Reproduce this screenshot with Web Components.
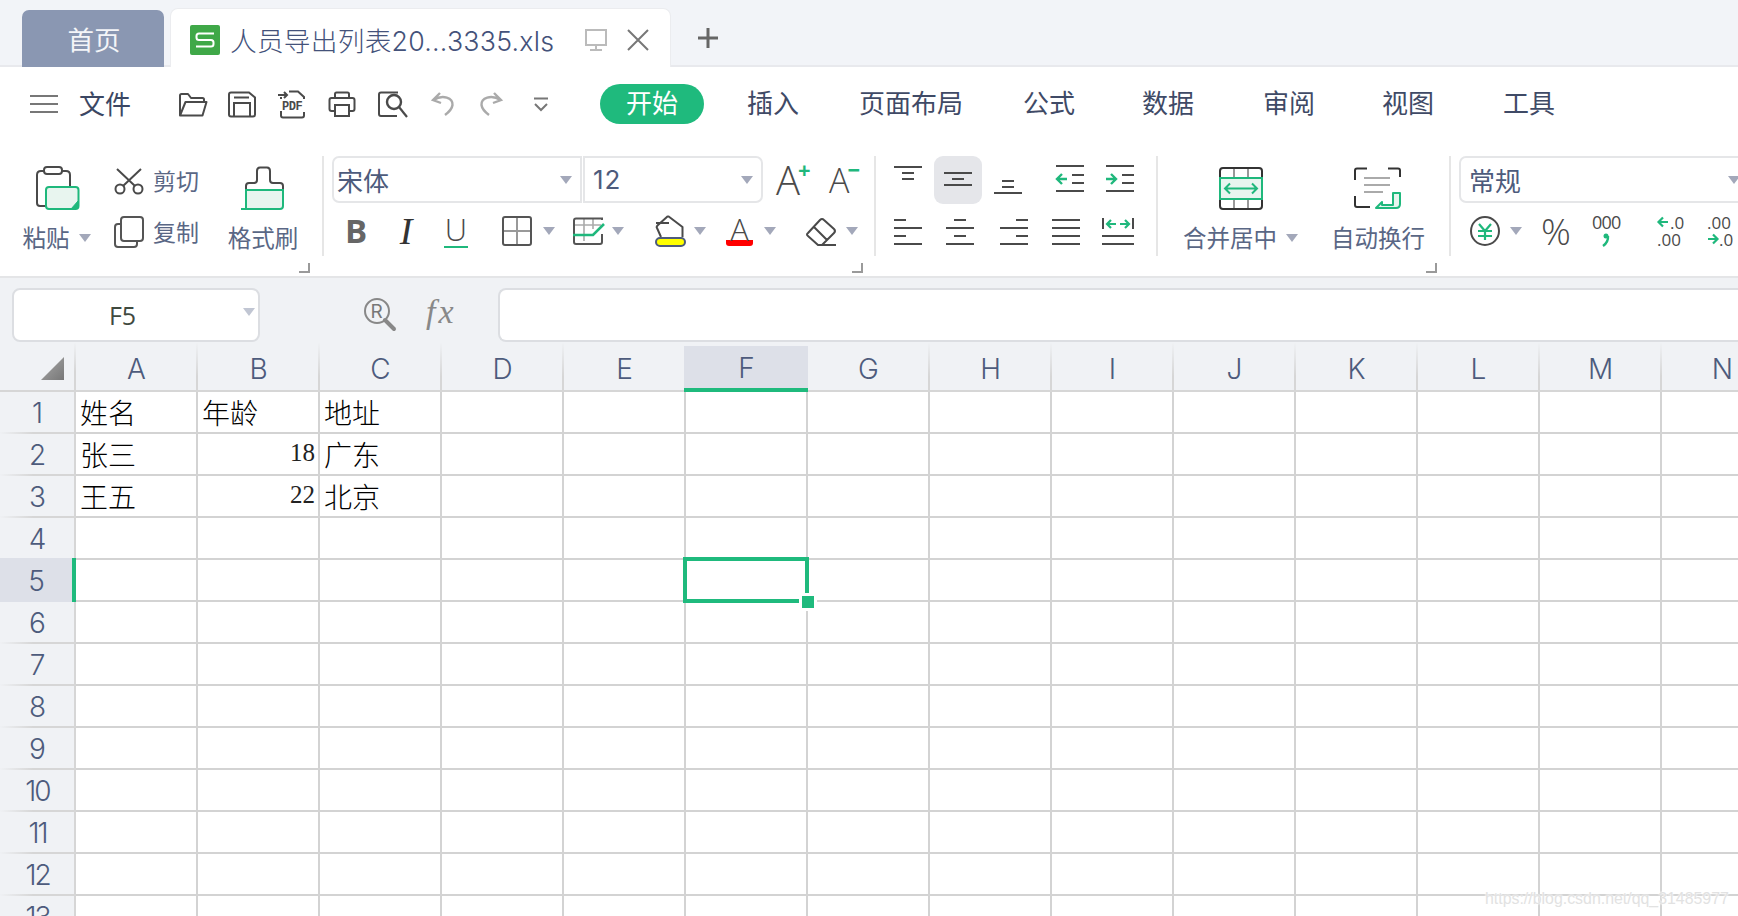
<!DOCTYPE html>
<html lang="zh-CN">
<head>
<meta charset="utf-8">
<title>人员导出列表</title>
<style>
  html, body { margin: 0; height: 100%; background: #fff; overflow: hidden; }
  body { width: 1738px; height: 916px; font-family: "Inter", "Noto Sans CJK SC", sans-serif; color: #4d5b7c; }
</style>
</head>
<body>
<wps-app>
  <wps-tabbar>
    <wps-home-tab>首页</wps-home-tab>
    <wps-doc-tab>人员导出列表20...3335.xls</wps-doc-tab>
  </wps-tabbar>

  <wps-menubar>
    <wps-menu-item active style="margin-left:0">开始</wps-menu-item>
    <wps-menu-item style="margin-left:43px">插入</wps-menu-item>
    <wps-menu-item style="margin-left:60px">页面布局</wps-menu-item>
    <wps-menu-item style="margin-left:60px">公式</wps-menu-item>
    <wps-menu-item style="margin-left:67px">数据</wps-menu-item>
    <wps-menu-item style="margin-left:69px">审阅</wps-menu-item>
    <wps-menu-item style="margin-left:67px">视图</wps-menu-item>
    <wps-menu-item style="margin-left:69px">工具</wps-menu-item>
  </wps-menubar>

  <wps-ribbon>
    <wps-group width="322" corner style="padding-left:23px">
      <wps-big-btn icon="paste" label="粘贴" caret style="width:67px"></wps-big-btn>
      <wps-stack style="margin-left:24px">
        <wps-small-btn icon="cut" label="剪切"></wps-small-btn>
        <wps-small-btn icon="copy" label="复制"></wps-small-btn>
      </wps-stack>
      <wps-big-btn icon="brush" label="格式刷" style="margin-left:29px;width:70px"></wps-big-btn>
    </wps-group>
    <wps-sep></wps-sep>

    <wps-group width="550" corner column top="16" style="--corner-right:11px">
      <wps-row style="height:47px">
        <wps-select first style="margin-left:8px;width:250px">宋体</wps-select>
        <wps-select last style="width:180px;letter-spacing:1px">12</wps-select>
        <wps-glyph kind="grow" style="margin-left:13px;width:34px">A<b>+</b></wps-glyph>
        <wps-glyph kind="shrink" style="margin-left:19px;width:30px">A<b>−</b></wps-glyph>
      </wps-row>
      <wps-row style="margin-top:13px">
        <wps-glyph kind="bold" style="margin-left:22px;width:20px">B</wps-glyph>
        <wps-glyph kind="italic" style="margin-left:32px;width:16px">I</wps-glyph>
        <wps-glyph kind="under" style="margin-left:30px;width:24px">U</wps-glyph>
        <wps-icon name="border" style="margin-left:34px"></wps-icon>
        <wps-caret style="margin-left:11px"></wps-caret>
        <wps-icon name="cellformat" style="margin-left:18px"></wps-icon>
        <wps-caret style="margin-left:7px"></wps-caret>
        <wps-icon name="bucket" style="margin-left:30px"></wps-icon>
        <wps-caret style="margin-left:8px"></wps-caret>
        <wps-glyph kind="color" style="margin-left:20px;width:27px">A</wps-glyph>
        <wps-caret style="margin-left:11px"></wps-caret>
        <wps-icon name="eraser" style="margin-left:30px"></wps-icon>
        <wps-caret style="margin-left:8px"></wps-caret>
      </wps-row>
    </wps-group>
    <wps-sep></wps-sep>

    <wps-group width="280" column top="16">
      <wps-row style="height:48px">
        <wps-icon name="alignTop" style="margin-left:8px"></wps-icon>
        <wps-icon name="alignMiddle" pressed style="margin-left:2px"></wps-icon>
        <wps-icon name="alignBottom" style="margin-left:2px"></wps-icon>
        <wps-icon name="indentLess" style="margin-left:14px"></wps-icon>
        <wps-icon name="indentMore" style="margin-left:2px"></wps-icon>
      </wps-row>
      <wps-row style="margin-top:12px">
        <wps-icon name="alignLeft" style="margin-left:18px"></wps-icon>
        <wps-icon name="alignCenter" style="margin-left:24px"></wps-icon>
        <wps-icon name="alignRight" style="margin-left:26px"></wps-icon>
        <wps-icon name="justify" style="margin-left:24px"></wps-icon>
        <wps-icon name="distribute" style="margin-left:22px"></wps-icon>
      </wps-row>
    </wps-group>
    <wps-sep></wps-sep>

    <wps-group width="291" corner top="27" style="padding-left:27px;--label-gap:11px;--corner-right:12px">
      <wps-big-btn icon="merge" label="合并居中" caret style="width:111px"></wps-big-btn>
      <wps-big-btn icon="wrap" label="自动换行" style="margin-left:34px;width:96px"></wps-big-btn>
    </wps-group>
    <wps-sep></wps-sep>

    <wps-group width="300" column top="16">
      <wps-row style="height:47px">
        <wps-select first last style="margin-left:8px;width:291px">常规</wps-select>
      </wps-row>
      <wps-row style="margin-top:13px">
        <wps-icon name="yen" style="margin-left:19px"></wps-icon>
        <wps-caret style="margin-left:10px"></wps-caret>
        <wps-glyph kind="percent" style="margin-left:19px;width:30px">%</wps-glyph>
        <wps-icon name="thousands" style="margin-left:21px"></wps-icon>
        <wps-icon name="decMore" style="margin-left:35px"></wps-icon>
        <wps-icon name="decLess" style="margin-left:22px"></wps-icon>
      </wps-row>
    </wps-group>
  </wps-ribbon>

  <wps-formula-bar cell="F5"></wps-formula-bar>
  <wps-sheet></wps-sheet>
</wps-app>

<script>
const GREEN = '#1fb87c';
const INK = '#4a4a4a';
const TINT = '#e8f5ef';

// width, height, inner svg
const ICONS = {
  menu: [28, 18, `<path d="M0 1H28M0 9H28M0 17H28" stroke="#777" stroke-width="2"/>`],
  folder: [30, 25, `<path d="M2 23V3.5Q2 2 3.5 2H10l3 4h11.5Q26 6 26 7.5V10M7.5 10H28.5L24.5 23.5H2Z" stroke="${INK}" stroke-width="2" fill="none" stroke-linejoin="round"/>`],
  save: [28, 27, `<path d="M3 1.5H21L27 6.5V23.5Q27 25.5 25 25.5H3Q1 25.5 1 23.5V3.5Q1 1.5 3 1.5ZM6 6.5H21M6 25V12H22V25" stroke="${INK}" stroke-width="2" fill="none"/>`],
  pdf: [28, 29, `<path d="M0 5H9M6 2L9 5L6 8M11 1.5H20L26 7V9M3 9V7M3 21V25.5Q3 27.5 5 27.5H24Q26 27.5 26 25.5V22" stroke="${INK}" stroke-width="2" fill="none"/><text x="4" y="19.5" font-family="Liberation Mono" font-weight="700" font-size="12" letter-spacing="-.4" fill="${INK}">PDF</text>`],
  print: [28, 26, `<path d="M7 7V3Q7 1.5 8.5 1.5H19.5Q21 1.5 21 3V7M6 20H3.5Q1.5 20 1.5 18V9Q1.5 7 3.5 7H24.5Q26.5 7 26.5 9V18Q26.5 20 24.5 20H22M7 14H21V25H7Z" stroke="${INK}" stroke-width="2" fill="none"/>`],
  preview: [30, 27, `<path d="M20 1.5H3Q1 1.5 1 3.5V23Q1 25 3 25H19" stroke="${INK}" stroke-width="2" fill="none"/><circle cx="16" cy="11" r="7" stroke="${INK}" stroke-width="2.4" fill="none"/><path d="M21 16L29 26" stroke="${INK}" stroke-width="2.2"/>`],
  undo: [24, 24, `<path d="M9 1L2 8L10 11M2.5 8C12 2 22 6 21.5 13C21 17 18 20 14 23" stroke="#aaa" stroke-width="2.4" fill="none"/>`],
  redo: [24, 24, `<path d="M15 1L22 8L14 11M21.5 8C12 2 2 6 2.5 13C3 17 6 20 10 23" stroke="#aaa" stroke-width="2.4" fill="none"/>`],
  more: [16, 15, `<path d="M1 1.5H15M2 7L8 13L14 7" stroke="#777" stroke-width="2" fill="none"/>`],
  sheetS: [30, 30, `<rect width="30" height="30" rx="2" fill="#3fa848"/><path d="M24 8.5H9Q6.5 8.5 6.5 11V12.5Q6.5 15 9 15H21Q23.5 15 23.5 17.5V19Q23.5 21.5 21 21.5H6" stroke="#fff" stroke-width="2" fill="none"/>`],
  monitor: [22, 22, `<path d="M1 1H21V16H1ZM11 16V21M5 21H17" stroke="#bbb" stroke-width="2" fill="none"/>`],
  close: [22, 22, `<path d="M1 1L21 21M21 1L1 21" stroke="#777" stroke-width="2"/>`],
  plus: [20, 20, `<path d="M10 0V20M0 10H20" stroke="#666" stroke-width="3"/>`],
  paste: [44, 44, `<path d="M9 5H6Q2 5 2 9V37Q2 40 5 40H11M27 5H31Q35 5 35 9V21" stroke="${INK}" stroke-width="2" fill="none"/><rect x="9" y="1" width="18" height="7" rx="3" stroke="${INK}" stroke-width="2" fill="none"/><rect x="11" y="21" width="32.5" height="22" rx="3" fill="${TINT}" stroke="${GREEN}" stroke-width="2"/><path d="M43 35L36 43H40Q43 43 43 40Z" fill="${GREEN}" stroke="${GREEN}"/>`],
  cut: [30, 27, `<circle cx="6" cy="21" r="4.5" stroke="${INK}" stroke-width="2" fill="none"/><circle cx="24" cy="21" r="4.5" stroke="${INK}" stroke-width="2" fill="none"/><path d="M9 18L27 1M21 18L3 1" stroke="${INK}" stroke-width="2"/>`],
  copy: [30, 32, `<rect x="7" y="1" width="22" height="24" rx="3" stroke="#555" stroke-width="2" fill="none"/><path d="M7 8H4Q1 8 1 11V28Q1 31 4 31H20Q23 31 23 28V25" stroke="#555" stroke-width="2" fill="none"/>`],
  brush: [44, 44, `<path d="M5 24V20Q5 17 8 17H13Q16 17 16 14V5Q16 1.5 19 1.5H26Q29 1.5 29 5V14Q29 17 32 17H39Q42 17 42 20V24" stroke="${INK}" stroke-width="2" fill="none"/><path d="M0 43H39Q42 43 42 40V24H5V42" fill="${TINT}" stroke="${GREEN}" stroke-width="2"/>`],
  border: [30, 30, `<path d="M15 2V28M2 15H28" stroke="#999" stroke-width="2"/><rect x="1" y="1" width="28" height="28" rx="2" stroke="#555" stroke-width="2" fill="none"/>`],
  cellformat: [32, 28, `<path d="M2 8H28M11 2V24M20 2V12" stroke="#aaa" stroke-width="1.6"/><path d="M29 3V1.5H3Q1 1.5 1 3.5V25Q1 27 3 27H27Q29 27 29 25V17" stroke="#555" stroke-width="2" fill="none"/><path d="M0 18H20L31 7" stroke="${GREEN}" stroke-width="2.6" fill="none"/>`],
  bucket: [32, 32, `<path d="M2 8H15M14 1L28.5 12V22M7 22L3 13Q2 12 4 10L14 1" stroke="${INK}" stroke-width="2" fill="none" stroke-linejoin="round"/><rect x="2" y="23" width="29" height="8" rx="4" fill="#ff0" stroke="#4d5b7c" stroke-width="2"/>`],
  eraser: [32, 30, `<path d="M2 17L14 4Q16 2 18 4L28 13Q30 15 28 17L16 29H12L2 20Q0 18.5 2 17ZM8 11L21 24M13 29H30" stroke="${INK}" stroke-width="2" fill="none"/>`],
  alignTop: [48, 48, `<path d="M10 11H38M18 17H30M18 23H30" stroke="${INK}" stroke-width="2"/>`],
  alignMiddle: [48, 48, `<path d="M10 17H38M18 23H30M10 29H38" stroke="${INK}" stroke-width="2"/>`],
  alignBottom: [48, 48, `<path d="M18 25H30M18 31H30M10 37H38" stroke="${INK}" stroke-width="2"/>`],
  indentLess: [48, 48, `<path d="M10 10H38M26 19H38M26 27H38M10 35H38" stroke="${INK}" stroke-width="2"/><path d="M21 23H11M16 18L11 23L16 28" stroke="${GREEN}" stroke-width="2.4" fill="none"/>`],
  indentMore: [48, 48, `<path d="M10 10H38M26 19H38M26 27H38M10 35H38" stroke="${INK}" stroke-width="2"/><path d="M10 23H20M15 18L20 23L15 28" stroke="${GREEN}" stroke-width="2.4" fill="none"/>`],
  alignLeft: [28, 28, `<path d="M0 3H12M0 11H28M0 19H12M0 27H28" stroke="${INK}" stroke-width="2"/>`],
  alignCenter: [28, 28, `<path d="M8 3H20M0 11H28M8 19H20M0 27H28" stroke="${INK}" stroke-width="2"/>`],
  alignRight: [28, 28, `<path d="M16 3H28M0 11H28M16 19H28M0 27H28" stroke="${INK}" stroke-width="2"/>`],
  justify: [28, 28, `<path d="M0 3H28M0 11H28M0 19H28M0 27H28" stroke="${INK}" stroke-width="2"/>`],
  distribute: [32, 28, `<path d="M1 1V12M31 1V12M0 19H32M0 27H32" stroke="${INK}" stroke-width="2"/><path d="M14 7H5M9 3L5 7L9 11M18 7H27M23 3L27 7L23 11" stroke="${GREEN}" stroke-width="2.2" fill="none"/>`],
  merge: [44, 44, `<path d="M15 2V12M29 2V12M15 31V42M29 31V42" stroke="#999" stroke-width="2"/><rect x="1" y="1" width="42" height="41" rx="3" stroke="#333" stroke-width="2" fill="none"/><rect x="1" y="11" width="42" height="21" fill="${TINT}" stroke="${GREEN}" stroke-width="2"/><path d="M6 21.5H38M11 16.5L6 21.5L11 26.5M33 16.5L38 21.5L33 26.5" stroke="${GREEN}" stroke-width="2" fill="none"/>`],
  wrap: [48, 44, `<path d="M13 1.5H3Q1 1.5 1 3.5V13M34 1.5H44Q46 1.5 46 3.5V10M1 29V38Q1 40 3 40H16" stroke="#333" stroke-width="2" fill="none"/><path d="M10 11H36M10 18H36M10 25H29" stroke="#aaa" stroke-width="2"/><path d="M39 26H46V37Q46 41 42 41H22L28 35V38H39Z" fill="${TINT}" stroke="${GREEN}" stroke-width="2" stroke-linejoin="round"/>`],
  yen: [30, 30, `<circle cx="15" cy="15" r="14" stroke="${INK}" stroke-width="2" fill="none"/><path d="M9 8L15 15L21 8M15 15V24M8 15H22M8 20H22" stroke="${GREEN}" stroke-width="2.2" fill="none"/>`],
  thousands: [30, 32, `<text x="0" y="14" font-family="Open Sans" font-size="18" letter-spacing="-.8" fill="${INK}">000</text><circle cx="14" cy="21" r="2.5" fill="${GREEN}"/><path d="M16 21Q16.5 27 11 31" stroke="${GREEN}" stroke-width="2.4" fill="none"/>`],
  decMore: [28, 32, `<path d="M11 7H2M6 2.5L1.5 7L6 11.5" stroke="${GREEN}" stroke-width="2.2" fill="none"/><text x="13" y="14" font-family="Open Sans" font-size="17" fill="${INK}">.0</text><text x="0" y="31" font-family="Open Sans" font-size="17" fill="${INK}">.00</text>`],
  decLess: [28, 32, `<text x="0" y="14" font-family="Open Sans" font-size="17" fill="${INK}">.00</text><path d="M1 24H10M6 19.5L10.5 24L6 28.5" stroke="${GREEN}" stroke-width="2.2" fill="none"/><text x="12" y="31" font-family="Open Sans" font-size="17" fill="${INK}">.0</text>`],
  search: [32, 32, `<circle cx="13" cy="13" r="12" stroke="#888" stroke-width="2" fill="none"/><path d="M21 22L30 31" stroke="#888" stroke-width="4" stroke-linecap="round"/><text x="6.5" y="20" font-family="Inter" font-size="19" fill="#777">R</text>`]
};

class WpsIcon extends HTMLElement {
  connectedCallback() {
    const [w, h, body] = ICONS[this.getAttribute('name')] || [0, 0, ''];
    this.attachShadow({ mode: 'open' }).innerHTML = `
      <style>
        :host { display: inline-flex; flex: none; }
        :host([pressed]) { background: #e5e6ea; border-radius: 9px; }
        svg { display: block; overflow: visible; }
      </style>
      <svg width="${w}" height="${h}" viewBox="0 0 ${w} ${h}">${body}</svg>`;
  }
}

class WpsCaret extends HTMLElement {
  constructor() {
    super();
    this.attachShadow({ mode: 'open' }).innerHTML = `
      <style>
        :host {
          display: block; flex: none; width: 0; height: 0;
          border-left: 6px solid transparent; border-right: 6px solid transparent;
          border-top: 8px solid var(--caret, #a3a8ba);
        }
      </style>`;
  }
}

class WpsApp extends HTMLElement {
  constructor() {
    super();
    this.attachShadow({ mode: 'open' }).innerHTML = `
      <style>
        :host { display: flex; flex-direction: column; width: 1738px; height: 916px; overflow: hidden; }
      </style>
      <slot></slot>`;
  }
}

class WpsTabbar extends HTMLElement {
  constructor() {
    super();
    this.attachShadow({ mode: 'open' }).innerHTML = `
      <style>
        :host {
          display: flex; flex: none; height: 67px; box-sizing: border-box;
          background: #f2f4f8; padding: 10px 0 0 22px;
          box-shadow: inset 0 -2px 0 #e8e9ed;
        }
        .plus { margin: 18px 0 0 28px; }
      </style>
      <slot></slot>
      <wps-icon class="plus" name="plus"></wps-icon>`;
  }
}

class WpsHomeTab extends HTMLElement {
  constructor() {
    super();
    this.attachShadow({ mode: 'open' }).innerHTML = `
      <style>
        :host {
          display: flex; align-items: center; justify-content: center;
          width: 142px; height: 57px; background: #8a97b2; color: #f4f5f8;
          border-radius: 7px 7px 0 0; font-size: 26.5px; padding: 0 0 1px 2px; box-sizing: border-box;
        }
      </style>
      <slot></slot>`;
  }
}

class WpsDocTab extends HTMLElement {
  constructor() {
    super();
    this.attachShadow({ mode: 'open' }).innerHTML = `
      <style>
        :host {
          display: flex; align-items: center; box-sizing: border-box;
          width: 499px; height: 58px; margin: -1px 0 0 7px; padding: 4px 0 0 19px;
          background: #fff; border-radius: 7px 7px 0 0;
          box-shadow: 0 0 0 1px #ebecef;
          font-size: 26.7px; font-weight: 300; letter-spacing: .25px; color: #44527a; white-space: nowrap;
        }
        .name { margin: -2px 0 0 10px; width: 335px; }
        .pin { margin-left: 20px; }
        .x { margin-left: 20px; }
      </style>
      <wps-icon name="sheetS"></wps-icon>
      <span class="name"><slot></slot></span>
      <wps-icon class="pin" name="monitor"></wps-icon>
      <wps-icon class="x" name="close"></wps-icon>`;
  }
}

class WpsMenubar extends HTMLElement {
  constructor() {
    super();
    this.attachShadow({ mode: 'open' }).innerHTML = `
      <style>
        :host { display: flex; flex: none; align-items: center; height: 73px; padding-left: 30px; padding-top: 1px; box-sizing: border-box; background: #fff; }
        .file { margin: -3px 0 0 21px; font-size: 26px; color: #3b4763; width: 52px; }
        wps-icon { margin-left: 22px; }
        .first { margin-left: 0; }
      </style>
      <wps-icon class="first" name="menu"></wps-icon>
      <span class="file">文件</span>
      <wps-icon style="margin-left:47px" name="folder"></wps-icon>
      <wps-icon style="margin-left:20px" name="save"></wps-icon>
      <wps-icon style="margin-left:22px" name="pdf"></wps-icon>
      <wps-icon style="margin-left:22px" name="print"></wps-icon>
      <wps-icon style="margin-left:22px" name="preview"></wps-icon>
      <wps-icon style="margin-left:23px" name="undo"></wps-icon>
      <wps-icon style="margin-left:24px" name="redo"></wps-icon>
      <wps-icon style="margin-left:30px" name="more"></wps-icon>
      <span style="width:51px"></span>
      <slot></slot>`;
  }
}

class WpsMenuItem extends HTMLElement {
  constructor() {
    super();
    this.attachShadow({ mode: 'open' }).innerHTML = `
      <style>
        :host { display: block; flex: none; font-size: 26px; color: #3f4a66; line-height: 40px; white-space: nowrap; }
        :host([active]) { width: 104px; text-align: center; background: #1fba7d; color: #fff; border-radius: 20px; }
      </style>
      <slot></slot>`;
  }
}

class WpsRibbon extends HTMLElement {
  constructor() {
    super();
    this.attachShadow({ mode: 'open' }).innerHTML = `
      <style>
        :host {
          display: flex; flex: none; box-sizing: border-box; height: 138px; width: 1738px; overflow: hidden;
          background: #fff; border-bottom: 2px solid #e4e5e7; align-items: flex-start;
        }
      </style>
      <slot></slot>`;
  }
}

class WpsGroup extends HTMLElement {
  connectedCallback() {
    const top = this.getAttribute('top') || 26;
    const w = this.getAttribute('width');
    this.attachShadow({ mode: 'open' }).innerHTML = `
      <style>
        :host {
          display: flex; flex: none; position: relative; box-sizing: border-box;
          width: ${w}px; height: 136px; padding-top: ${top}px; align-items: flex-start;
        }
        :host([column]) { flex-direction: column; }
        .corner {
          position: absolute; right: var(--corner-right, 12px); top: 123px; width: 9px; height: 8px;
          border-right: 2px solid #9a9a9a; border-bottom: 2px solid #9a9a9a;
        }
      </style>
      <slot></slot>
      ${this.hasAttribute('corner') ? '<div class="corner"></div>' : ''}`;
  }
}

class WpsSep extends HTMLElement {
  constructor() {
    super();
    this.attachShadow({ mode: 'open' }).innerHTML = `
      <style>
        :host { display: block; flex: none; width: 2px; height: 100px; margin-top: 16px; background: #e6e6e6; }
      </style>`;
  }
}

class WpsRow extends HTMLElement {
  constructor() {
    super();
    this.attachShadow({ mode: 'open' }).innerHTML = `
      <style>
        :host { display: flex; align-items: center; height: 30px; white-space: nowrap; }
      </style>
      <slot></slot>`;
  }
}

class WpsStack extends HTMLElement {
  constructor() {
    super();
    this.attachShadow({ mode: 'open' }).innerHTML = `
      <style>
        :host { display: flex; flex-direction: column; gap: 21px; flex: none; }
      </style>
      <slot></slot>`;
  }
}

class WpsBigBtn extends HTMLElement {
  connectedCallback() {
    const caret = this.hasAttribute('caret') ? '<wps-caret class="c"></wps-caret>' : '';
    this.attachShadow({ mode: 'open' }).innerHTML = `
      <style>
        :host { display: flex; flex: none; flex-direction: column; align-items: center; }
        .label { display: flex; align-items: center; margin-top: var(--label-gap, 12px); height: 30px; font-size: 23.5px; color: #5a6785; white-space: nowrap; }
        .c { margin-left: 9px; margin-top: 2px; }
      </style>
      <wps-icon name="${this.getAttribute('icon')}"></wps-icon>
      <div class="label">${this.getAttribute('label')}${caret}</div>`;
  }
}

class WpsSmallBtn extends HTMLElement {
  connectedCallback() {
    this.attachShadow({ mode: 'open' }).innerHTML = `
      <style>
        :host { display: flex; align-items: center; height: 30px; font-size: 23px; color: #5a6785; white-space: nowrap; }
        span { margin: -2px 0 0 9px; }
      </style>
      <wps-icon name="${this.getAttribute('icon')}"></wps-icon>
      <span>${this.getAttribute('label')}</span>`;
  }
}

class WpsSelect extends HTMLElement {
  constructor() {
    super();
    this.attachShadow({ mode: 'open' }).innerHTML = `
      <style>
        :host {
          display: flex; flex: none; align-items: center; justify-content: space-between; box-sizing: border-box;
          height: 47px; border: 2px solid #e5e6e8; font-size: 26px; color: #4d5b7c;
          padding: 0 8px 0 8px; background: #fff;
        }
        :host([first]) { border-radius: 7px 0 0 7px; padding-left: 3px; }
        :host([last]) { border-radius: 0 7px 7px 0; margin-left: 1px; }
        :host([first][last]) { border-radius: 7px 0 0 7px; padding-left: 8px; margin-left: 0; }
      </style>
      <span><slot></slot></span>
      <wps-caret></wps-caret>`;
  }
}

class WpsGlyph extends HTMLElement {
  constructor() {
    super();
    this.attachShadow({ mode: 'open' }).innerHTML = `
      <style>
        :host {
          display: flex; flex: none; position: relative; justify-content: center; align-items: center; height: 30px;
          font-family: "Open Sans", sans-serif; color: #4a4a4a; line-height: 30px;
        }
        :host([kind=bold]) { font-size: 33px; font-weight: 700; color: #666; }
        :host([kind=italic]) { font-family: "Liberation Serif", serif; font-style: italic; font-size: 38px; color: #333; }
        :host([kind=under]) { font-size: 31px; font-weight: 300; height: 32px; line-height: 26px; align-items: flex-start; border-bottom: 2px solid #1fb87c; margin-top: 2px; box-sizing: border-box; }
        :host([kind=color]) { font-size: 31px; font-weight: 300; align-items: flex-start; line-height: 26px; height: 30px; box-sizing: border-box; border-bottom: 6px solid #f00; border-radius: 3px; }
        :host([kind=grow]) { font-size: 40px; font-weight: 300; justify-content: flex-start; }
        :host([kind=shrink]) { font-size: 34px; font-weight: 300; justify-content: flex-start; }
        :host([kind=percent]) { font-size: 37px; font-weight: 300; }
        ::slotted(b) { font: 700 22px/22px "Open Sans", sans-serif; color: #1fb87c; margin: -22px 0 0 -2px; }
      </style>
      <slot></slot>`;
  }
}

class WpsFormulaBar extends HTMLElement {
  connectedCallback() {
    this.attachShadow({ mode: 'open' }).innerHTML = `
      <style>
        :host {
          display: flex; flex: none; align-items: flex-start; box-sizing: border-box; height: 65px;
          padding: 10px 0 0 12px; background: #f0f2f5;
        }
        .box { box-sizing: border-box; height: 54px; background: #fff; border: 2px solid #dcdee2; border-radius: 8px; }
        .name { display: flex; align-items: center; width: 248px; flex: none; font: 25px "Open Sans", sans-serif; color: #3f4a3f; }
        .name span { flex: 1; text-align: center; padding-right: 12px; }
        .name wps-caret { margin-right: 3px; --caret: #c1c6d3; margin-top: -6px; }
        .search { margin: 10px 0 0 104px; }
        .fx { margin: 5px 0 0 30px; width: 32px; font: italic 34px "Liberation Serif", serif; letter-spacing: 3px; color: #888; }
        .input { flex: 1; margin-left: 40px; border-right: 0; border-radius: 8px 0 0 8px; }
      </style>
      <div class="box name"><span>${this.getAttribute('cell')}</span><wps-caret></wps-caret></div>
      <wps-icon class="search" name="search"></wps-icon>
      <span class="fx">fx</span>
      <div class="box input"></div>`;
  }
}

const CELLS = {
  A1: '姓名', B1: '年龄', C1: '地址',
  A2: '张三', B2: '18', C2: '广东',
  A3: '王五', B3: '22', C3: '北京'
};

class WpsSheet extends HTMLElement {
  connectedCallback() {
    const cols = 'ABCDEFGHIJKLMN'.split('');
    let html = '<div class="corner"><i></i></div>';
    cols.forEach(c => {
      html += `<div class="colhead${c === 'F' ? ' on' : ''}">${c}</div>`;
    });
    for (let r = 1; r <= 13; r++) {
      html += `<div class="rowhead${r === 5 ? ' on' : ''}${r >= 10 ? ' tight' : ''}">${r}</div>`;
      cols.forEach(c => {
        const v = CELLS[c + r] || '';
        const num = /^\d+$/.test(v);
        const sel = c === 'F' && r === 5 ? '<div class="sel"><b></b></div>' : '';
        html += `<div class="cell${num ? ' num' : ''}">${v}${sel}</div>`;
      });
    }
    this.attachShadow({ mode: 'open' }).innerHTML = `
      <style>
        :host { display: block; flex: 1; min-height: 0; overflow: hidden; position: relative; background: #fff; }
        .grid {
          display: grid; grid-template-columns: 76px repeat(14, 122px);
          grid-template-rows: 49px repeat(13, 42px); width: 1784px;
        }
        .grid > div { box-sizing: border-box; min-width: 0; }
        .corner, .colhead, .rowhead { background: #f0f2f5; display: flex; align-items: center; justify-content: center; }
        .corner {
          justify-content: flex-end; align-items: flex-end; padding: 0 10px 10px 0;
          border-bottom: 2px solid #d6d6d6;
          border-right: 2px solid; border-image: linear-gradient(#f0f2f5, #d6d6d6 60%) 1;
        }
        .corner i { display: block; width: 23px; height: 23px; background: linear-gradient(135deg, #aaa, #777); clip-path: polygon(100% 0, 100% 100%, 0 100%); }
        .colhead {
          font: 300 28px "Inter", sans-serif; color: #4d5b7c; padding: 5px 0 0 1px;
          border-right: 2px solid #d6d6d6; border-bottom: 2px solid #d6d6d6;
          border-image: linear-gradient(#f0f2f5, #d6d6d6 70%) 1;
        }
        .colhead.on { background: linear-gradient(#f0f2f5 3px, #dde0e8 3px); border-bottom: 4px solid #1fba7d; border-image: none; border-right: 0; margin-left: -2px; }
        .rowhead {
          font: 300 28px "Inter", sans-serif; color: #4d5b7c;
          border-right: 2px solid #d6d6d6; border-bottom: 2px solid; padding: 1px 0 0 1px;
          border-image: linear-gradient(90deg, #f0f2f5, #d6d6d6 45%) 1;
        }
        .rowhead.tight { letter-spacing: -2px; }
        .rowhead.on { background: #dde0e8; border: 0; border-right: 4px solid #1fba7d; margin-top: -2px; padding-top: 2px; }
        .cell {
          position: relative; border-right: 2px solid #d3d3d3; border-bottom: 2px solid #d3d3d3;
          font: 300 28px/46px "Liberation Serif", "Noto Sans CJK SC", serif; color: #000; padding: 0 0 0 4px; white-space: nowrap;
        }
        .cell.num { text-align: right; padding: 0 3px 0 0; font-size: 25px; line-height: 38px; color: #222; }
        .sel { position: absolute; left: -3px; top: -3px; width: 126px; height: 46px; box-sizing: border-box; border: 4px solid #1fba7d; z-index: 2; }
        .sel b { position: absolute; right: -9px; bottom: -9px; width: 12px; height: 12px; background: #1fba7d; box-shadow: 0 0 0 3px #fff; }
        .mark {
          position: absolute; left: 1485px; top: 546px; font: 15.9px/20px "Liberation Sans", sans-serif;
          color: #e2e2e2; text-shadow: 0 0 2px #fff, 0 0 2px #fff; white-space: nowrap;
        }
      </style>
      <div class="grid">${html}</div>
      <div class="mark">https://blog.csdn.net/qq_31485977</div>`;
  }
}

customElements.define('wps-icon', WpsIcon);
customElements.define('wps-caret', WpsCaret);
customElements.define('wps-app', WpsApp);
customElements.define('wps-tabbar', WpsTabbar);
customElements.define('wps-home-tab', WpsHomeTab);
customElements.define('wps-doc-tab', WpsDocTab);
customElements.define('wps-menubar', WpsMenubar);
customElements.define('wps-menu-item', WpsMenuItem);
customElements.define('wps-ribbon', WpsRibbon);
customElements.define('wps-group', WpsGroup);
customElements.define('wps-sep', WpsSep);
customElements.define('wps-row', WpsRow);
customElements.define('wps-stack', WpsStack);
customElements.define('wps-big-btn', WpsBigBtn);
customElements.define('wps-small-btn', WpsSmallBtn);
customElements.define('wps-select', WpsSelect);
customElements.define('wps-glyph', WpsGlyph);
customElements.define('wps-formula-bar', WpsFormulaBar);
customElements.define('wps-sheet', WpsSheet);
</script>
</body>
</html>
